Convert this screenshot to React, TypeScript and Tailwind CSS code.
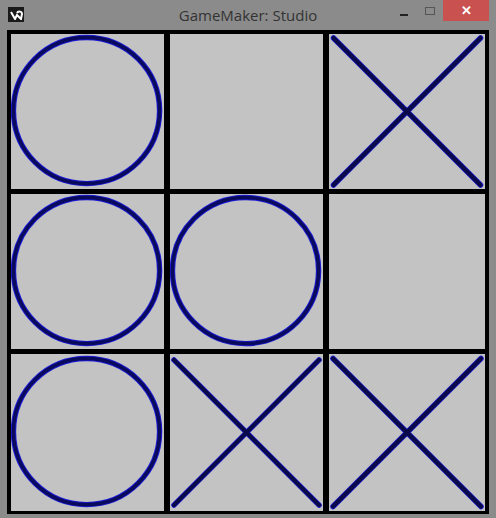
import React from "react";

const O = () => (
  <svg width="100%" height="100%" viewBox="0 0 156 156" className="block">
    <circle cx="77" cy="77" r="74.5" fill="none" stroke="#1a1ad8" strokeWidth="5.5" />
    <circle cx="77" cy="77" r="74.5" fill="none" stroke="#0a0a5c" strokeWidth="3.5" />
  </svg>
);

const X = () => (
  <svg width="100%" height="100%" viewBox="0 0 156 156" className="block">
    <g strokeLinecap="round">
      <line x1="4" y1="4" x2="152" y2="152" stroke="#1a1ad0" strokeWidth="5.5" />
      <line x1="152" y1="4" x2="4" y2="152" stroke="#1a1ad0" strokeWidth="5.5" />
      <line x1="4" y1="4" x2="152" y2="152" stroke="#0a0a4a" strokeWidth="4" />
      <line x1="152" y1="4" x2="4" y2="152" stroke="#0a0a4a" strokeWidth="4" />
    </g>
  </svg>
);

const board = ["O", "", "X", "O", "O", "", "O", "X", "X"];

export default function App() {
  return (
    <div className="w-[496px] h-[518px] bg-[#8b8b8b] flex flex-col" style={{ fontFamily: '"Open Sans", "Noto Sans", sans-serif' }}>
      <div className="h-[30px] flex items-start relative">
        <div className="mt-[7px] ml-[8px] w-[16px] h-[15px] bg-[#1a1a1a] flex items-center justify-center">
          <svg width="13" height="10" viewBox="0 0 13 10">
            <path d="M1 2 L5 9 L7 5 L11 9 L12 4 C12 1 8 1 7 3" fill="none" stroke="#fff" strokeWidth="2" />
          </svg>
        </div>
        <div className="absolute left-0 right-0 top-[5px] text-center text-[15px] text-[#333] leading-[20px]">GameMaker: Studio</div>
        <div className="ml-auto flex items-start">
          <div className="w-[26px] h-[20px] flex items-center justify-center mt-[1px]">
            <div className="w-[8px] h-[2px] bg-[#222] mt-[7px]" />
          </div>
          <div className="w-[26px] h-[20px] flex items-start justify-center pt-[7px]">
            <div className="w-[10px] h-[8px] border border-[#555]" />
          </div>
          <div className="w-[46px] h-[21px] bg-[#c9514f] flex items-center justify-center text-white text-[13px] font-bold leading-none mr-[7px]">✕</div>
        </div>
      </div>
      <div className="ml-[7px] w-[482px] h-[484px] bg-black p-[4px] grid grid-cols-[153px_153px_156px] grid-rows-[155px_155px_157px] gap-x-[6px] gap-y-[5px]">
        {board.map((c, i) => (
          <div key={i} className="bg-[#c3c3c3]">
            {c === "O" ? <O /> : c === "X" ? <X /> : null}
          </div>
        ))}
      </div>
    </div>
  );
}
